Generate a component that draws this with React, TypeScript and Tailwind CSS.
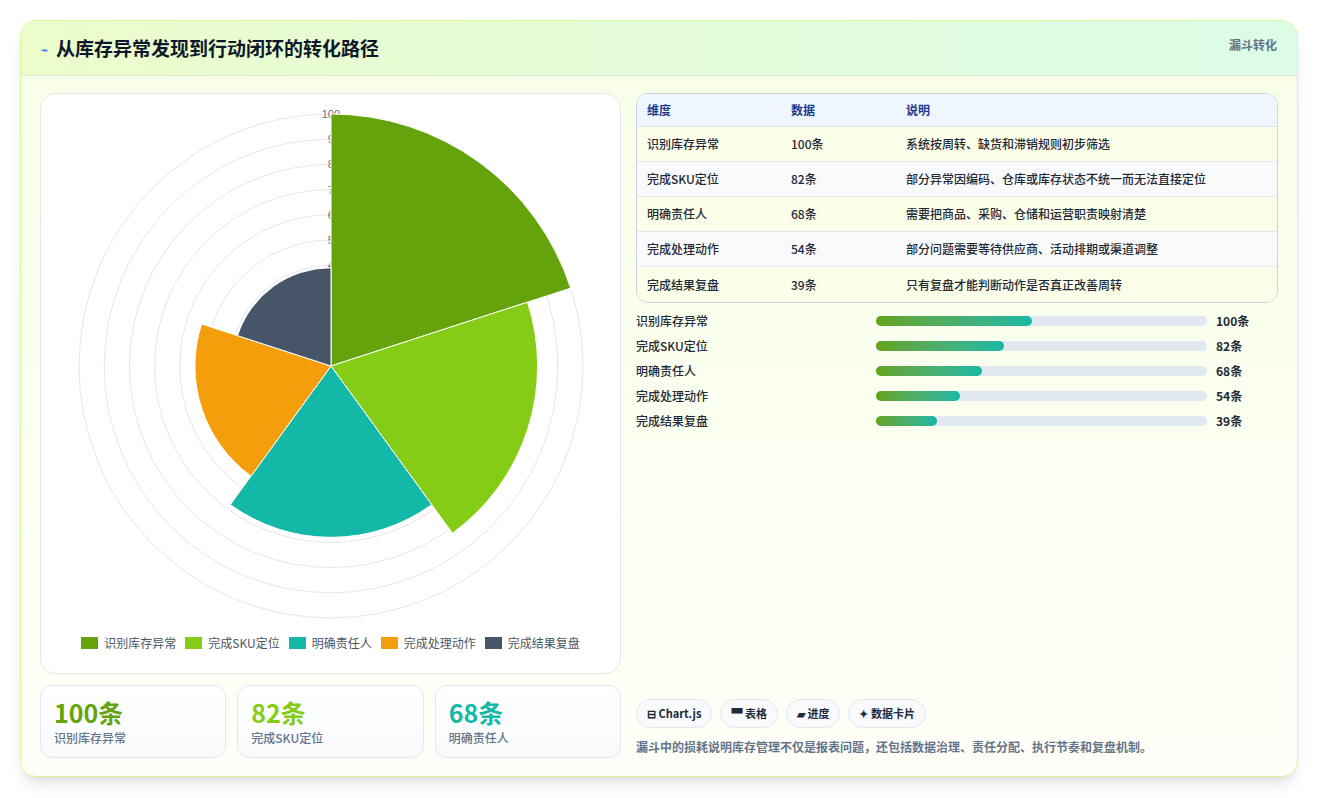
import React from "react";

const data = [
  { name: "识别库存异常", v: 100, color: "#65a30d", desc: "系统按周转、缺货和滞销规则初步筛选" },
  { name: "完成SKU定位", v: 82, color: "#84cc16", desc: "部分异常因编码、仓库或库存状态不统一而无法直接定位" },
  { name: "明确责任人", v: 68, color: "#14b8a6", desc: "需要把商品、采购、仓储和运营职责映射清楚" },
  { name: "完成处理动作", v: 54, color: "#f59e0b", desc: "部分问题需要等待供应商、活动排期或渠道调整" },
  { name: "完成结果复盘", v: 39, color: "#475569", desc: "只有复盘才能判断动作是否真正改善周转" },
];

function wedge(cx: number, cy: number, r: number, a0: number, a1: number) {
  const t = (a: number) => (a * Math.PI) / 180;
  const x0 = cx + r * Math.cos(t(a0)), y0 = cy + r * Math.sin(t(a0));
  const x1 = cx + r * Math.cos(t(a1)), y1 = cy + r * Math.sin(t(a1));
  return `M${cx},${cy} L${x0},${y0} A${r},${r} 0 0 1 ${x1},${y1} Z`;
}

function Polar() {
  const cx = 290, cy = 272;
  return (
    <svg width="580" height="530" viewBox="0 0 580 530">
      {Array.from({ length: 10 }, (_, i) => (
        <circle key={i} cx={cx} cy={cy} r={25.2 * (i + 1)} fill="none" stroke="#e5e7eb" strokeWidth="1" />
      ))}
      {Array.from({ length: 7 }, (_, i) => {
        const v = 40 + i * 10;
        return (
          <text key={v} x={cx + 9} y={cy - 2.52 * v + 4} textAnchor="end" fontSize="11" fill="#6b7280" fontFamily="Liberation Sans, sans-serif">{v}</text>
        );
      })}
      {data.map((d, i) => (
        <path key={d.name} d={wedge(cx, cy, 2.52 * d.v, -90 + i * 72, -18 + i * 72)} fill={d.color} stroke="#fff" strokeWidth="1" />
      ))}
    </svg>
  );
}

export default function App() {
  const font = { fontFamily: '"Noto Sans CJK SC", "Noto Sans", sans-serif' };
  return (
    <div className="w-[1318px] h-[798px] bg-white pt-5 px-5" style={font}>
      <div className="w-[1278px] h-[757px] rounded-2xl border border-[#d9f99d] overflow-hidden bg-gradient-to-b from-[#f7fee7] to-[#fefff8] shadow-lg flex flex-col">
        <div className="h-[55px] flex items-start justify-between px-5 bg-gradient-to-r from-[#ecfccb] to-[#dcfce7] border-b border-[#e2edd8]">
          <div className="flex items-center gap-2 h-[55px]">
            <span className="text-[#2563eb] text-[12px]">⌁</span>
            <span className="text-[19px] font-bold text-[#0f172a]">从库存异常发现到行动闭环的转化路径</span>
          </div>
          <span className="text-[12px] font-bold text-[#64748b] mt-[15px]">漏斗转化</span>
        </div>
        <div className="flex-1 flex gap-[15px] px-[19px] pt-[17px]">
          <div className="w-[581px] flex flex-col gap-[11px]">
            <div className="h-[581px] rounded-2xl border border-[#e5e7eb] bg-white flex flex-col items-center">
              <Polar />
              <div className="flex gap-[9px] text-[12px] text-[#4b5563] mt-[10px]">
                {data.map((d) => (
                  <div key={d.name} className="flex items-center gap-[6px]">
                    <span className="w-[17px] h-[12px]" style={{ background: d.color }} />
                    {d.name}
                  </div>
                ))}
              </div>
            </div>
            <div className="grid grid-cols-3 gap-[11px]">
              {data.slice(0, 3).map((d) => (
                <div key={d.name} className="h-[73px] rounded-xl border border-[#e2e8f0] bg-gradient-to-b from-white to-[#f8fafc] px-[13px] pt-[9px]">
                  <div className="text-[25px] font-bold leading-[34px]" style={{ color: d.color }}>{d.v}条</div>
                  <div className="text-[12px] font-medium text-[#64748b]">{d.name}</div>
                </div>
              ))}
            </div>
          </div>
          <div className="flex-1 flex flex-col pb-[20px]">
            <div className="rounded-xl border border-[#cbd5e1] overflow-hidden text-[12px] font-medium">
              <div className="flex h-[33px] items-center bg-[#eff6ff] text-[#1e3a8a] font-bold border-b border-[#dbe3ee]">
                <span className="w-[154px] pl-[10px]">维度</span>
                <span className="w-[115px]">数据</span>
                <span>说明</span>
              </div>
              {data.map((d, i) => (
                <div key={d.name} className={`flex h-[35px] items-center text-[#1f2937] ${i % 2 ? "bg-[#f8fafc]" : "bg-[#fbfee9]"} ${i < 4 ? "border-b border-[#e5e7eb]" : ""}`}>
                  <span className="w-[154px] pl-[10px]">{d.name}</span>
                  <span className="w-[115px]">{d.v}条</span>
                  <span>{d.desc}</span>
                </div>
              ))}
            </div>
            <div className="flex flex-col gap-[7px] mt-[9px]">
              {data.map((d) => (
                <div key={d.name} className="flex items-center h-[18px] text-[12px] font-medium">
                  <span className="w-[240px] text-[#1f2937]">{d.name}</span>
                  <div className="w-[331px] h-[10px] rounded-full bg-[#e2e8f0]">
                    <div className="h-full rounded-full bg-gradient-to-r from-[#65a30d] to-[#14b8a6]" style={{ width: `${d.v * 0.47}%` }} />
                  </div>
                  <span className="ml-[9px] font-bold text-[#1f2937]">{d.v}条</span>
                </div>
              ))}
            </div>
            <div className="flex-1" />
            <div className="flex gap-2 text-[11px] font-bold text-[#1f2937] mb-[10px]">
              {["⊟ Chart.js", "▀ 表格", "▰ 进度", "✦ 数据卡片"].map((t) => (
                <span key={t} className="h-[29px] px-[10px] flex items-center rounded-full border border-[#e2e8f0] bg-[#f8fafc]">{t}</span>
              ))}
            </div>
            <div className="text-[12px] font-bold text-[#64748b]">漏斗中的损耗说明库存管理不仅是报表问题，还包括数据治理、责任分配、执行节奏和复盘机制。</div>
          </div>
        </div>
      </div>
    </div>
  );
}
